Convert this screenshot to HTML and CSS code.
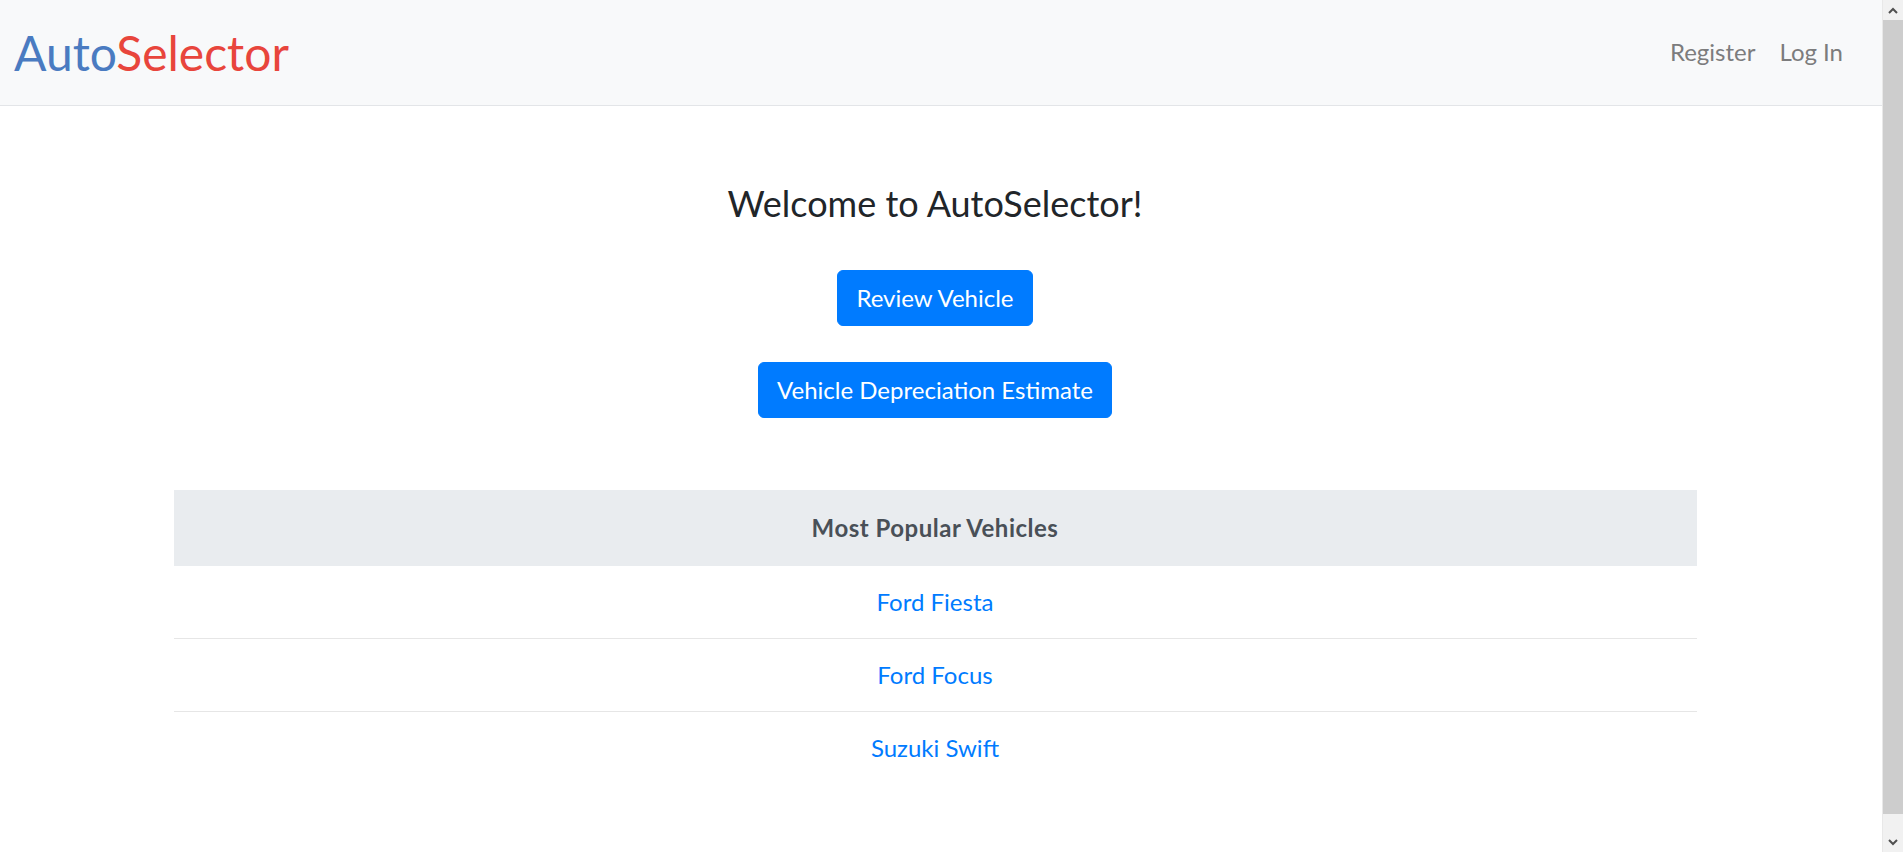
FILE: index.html
```html
<!DOCTYPE html>
<html lang="en">
<head>
<meta charset="utf-8">
<title>AutoSelector</title>
<link rel="stylesheet" href="styles.css">
</head>
<body>
<div class="page">
  <header class="navbar">
    <a class="brand" href="#"><span class="brand-auto">Auto</span><span class="brand-selector">Selector</span></a>
    <nav class="nav">
      <a class="nav-link" href="#">Register</a>
      <a class="nav-link" href="#">Log In</a>
    </nav>
  </header>
  <main class="content">
    <h1 class="welcome">Welcome to AutoSelector!</h1>
    <div class="actions">
      <a class="btn" href="#">Review Vehicle</a>
      <a class="btn" href="#">Vehicle Depreciation Estimate</a>
    </div>
    <table class="popular">
      <thead>
        <tr><th>Most Popular Vehicles</th></tr>
      </thead>
      <tbody>
        <tr><td><a href="#">Ford Fiesta</a></td></tr>
        <tr><td><a href="#">Ford Focus</a></td></tr>
        <tr><td><a href="#">Suzuki Swift</a></td></tr>
      </tbody>
    </table>
  </main>
</div>
<div class="scrollbar" aria-hidden="true">
  <div class="sb-btn">
    <svg width="10" height="7" viewBox="0 0 10 7"><path d="M1 6 L5 2 L9 6" fill="none" stroke="#505050" stroke-width="2"/></svg>
  </div>
  <div class="sb-track"><div class="sb-thumb"></div></div>
  <div class="sb-btn">
    <svg width="10" height="7" viewBox="0 0 10 7"><path d="M1 1 L5 5 L9 1" fill="none" stroke="#505050" stroke-width="2"/></svg>
  </div>
</div>
</body>
</html>
```
FILE: styles.css
```css
html, body {
  margin: 0;
  padding: 0;
}
body {
  display: grid;
  grid-template-columns: 1fr 21px;
  align-items: start;
  font-family: Lato, "Open Sans", sans-serif;
  font-size: 24px;
  line-height: 36px;
  color: #212529;
  background: #fff;
}
a {
  text-decoration: none;
}
.page {
  min-width: 0;
}
.navbar {
  display: flex;
  align-items: center;
  justify-content: space-between;
  height: 105px;
  padding: 0 27px 0 14px;
  background: #f8f9fa;
  border-bottom: 1px solid #e3e5e8;
}
.brand {
  font-size: 48px;
  line-height: 72px;
}
.brand-auto {
  color: #4a7bc1;
}
.brand-selector {
  color: #e8453c;
}
.nav {
  display: flex;
}
.nav-link {
  color: #7c7c7d;
  padding: 0 12px 1px;
}
.content {
  padding: 76px 12px 96px 0;
  display: flex;
  flex-direction: column;
  align-items: center;
}
.welcome {
  margin: 0;
  font-size: 36px;
  line-height: 43px;
  font-weight: 400;
  color: #212529;
}
.actions {
  margin-top: 45px;
  display: flex;
  flex-direction: column;
  align-items: center;
  gap: 36px;
}
.btn {
  display: inline-block;
  color: #fff;
  background: #007bff;
  border: 1px solid #007bff;
  border-radius: 6px;
  padding: 9px 18px;
}
.popular {
  margin-top: 72px;
  width: 1523px;
  border-collapse: collapse;
  text-align: center;
}
.popular th {
  background: #e9ecef;
  color: #495057;
  font-weight: 700;
  letter-spacing: 0.5px;
  padding: 20px 18px;
}
.popular td {
  padding: 18px;
}
.popular tbody tr + tr td {
  border-top: 1px solid #e6e6e6;
}
.popular td a {
  color: #007bff;
}
.scrollbar {
  height: 852px;
  display: flex;
  flex-direction: column;
  background: #f1f1f1;
  border-left: 1px solid #e8e8e8;
  box-sizing: border-box;
}
.sb-btn {
  height: 20px;
  display: flex;
  align-items: center;
  justify-content: center;
  flex: none;
}
.sb-track {
  flex: 1;
  padding: 0 0 18px;
  display: flex;
}
.sb-thumb {
  flex: 1;
  background: #cdcdcd;
}
```
